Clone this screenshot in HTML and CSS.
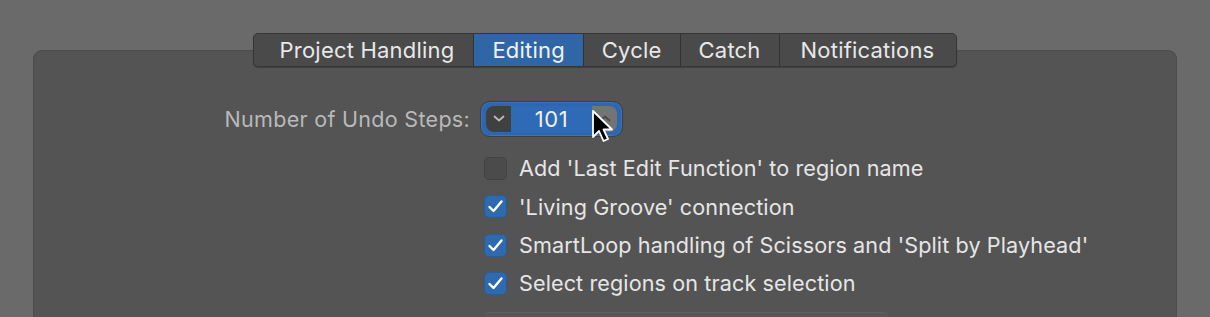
FILE: index.html
```html
<!DOCTYPE html>
<html lang="en">
<head>
    <meta charset="UTF-8">
    <title>Editing Settings</title>
    <link rel="stylesheet" href="styles.css">
</head>
<body>
    <div class="panel">
        <div class="tabs">
            <div class="tab">Project Handling</div>
            <div class="tab active">Editing</div>
            <div class="tab">Cycle</div>
            <div class="tab">Catch</div>
            <div class="tab">Notifications</div>
        </div>

        <div class="settings">
            <div class="row undo-row">
                <label class="row-label">Number of Undo Steps:</label>
                <div class="stepper">
                    <span class="step-btn down">
                        <svg width="14" height="9" viewBox="0 0 14 9"><path d="M2.5 2.5 L7 6.5 L11.5 2.5" fill="none" stroke="#bdbdbd" stroke-width="1.7" stroke-linecap="round" stroke-linejoin="round"/></svg>
                    </span>
                    <span class="step-value">101</span>
                    <span class="step-btn up">
                        <svg width="14" height="9" viewBox="0 0 14 9"><path d="M2.5 6.5 L7 2.5 L11.5 6.5" fill="none" stroke="#4a4a4a" stroke-width="1.7" stroke-linecap="round" stroke-linejoin="round"/></svg>
                    </span>
                    <svg class="cursor" width="26" height="38" viewBox="0 0 26 38">
                        <path d="M2 2 L2 28 L8 22 L12.5 32 L17 30 L12.5 20.5 L21 20.5 Z" fill="#000" stroke="#fff" stroke-width="1.8" stroke-linejoin="round"/>
                    </svg>
                </div>
            </div>

            <div class="checks">
                <label class="check"><span class="box"></span>Add 'Last Edit Function' to region name</label>
                <label class="check"><span class="box on"><svg width="17" height="15" viewBox="0 0 17 15"><path d="M2.5 8 L6.5 12 L14.5 2.5" fill="none" stroke="#fff" stroke-width="2.4" stroke-linecap="round" stroke-linejoin="round"/></svg></span>'Living Groove' connection</label>
                <label class="check"><span class="box on"><svg width="17" height="15" viewBox="0 0 17 15"><path d="M2.5 8 L6.5 12 L14.5 2.5" fill="none" stroke="#fff" stroke-width="2.4" stroke-linecap="round" stroke-linejoin="round"/></svg></span>SmartLoop handling of Scissors and 'Split by Playhead'</label>
                <label class="check"><span class="box on"><svg width="17" height="15" viewBox="0 0 17 15"><path d="M2.5 8 L6.5 12 L14.5 2.5" fill="none" stroke="#fff" stroke-width="2.4" stroke-linecap="round" stroke-linejoin="round"/></svg></span>Select regions on track selection</label>
            </div>

            <div class="popup-edge"></div>
        </div>
    </div>
</body>
</html>
```

FILE: styles.css
```css
body {
    margin: 0;
    padding: 0;
    background: #6a6a6a;
    font-family: 'Inter', 'Noto Sans', sans-serif;
    color: #e6e6e6;
    overflow: hidden;
    height: 317px;
}

/* Settings panel */
.panel {
    margin: 50px 33px 0 33px;
    height: 266px;
    background: #545454;
    border: 1px solid #4c4c4c;
    border-bottom: none;
    border-radius: 9px 9px 0 0;
    display: flex;
    flex-direction: column;
    align-items: center;
}

/* Tabs */
.tabs {
    display: flex;
    margin-top: -18px;
    height: 34px;
    background: #4a4a4a;
    border: 1px solid #363636;
    border-radius: 5px;
    box-shadow: 0 1px 1px rgba(0, 0, 0, 0.25);
    overflow: hidden;
}

.tab {
    display: flex;
    align-items: center;
    justify-content: center;
    padding: 0 18px;
    font-size: 22px;
    letter-spacing: 0.2px;
    color: #e8e8e8;
    border-left: 1px solid #333;
}

.tab:first-child {
    border-left: none;
    padding: 0 19px 0 26px;
}

.tab:last-child {
    padding: 0 22px 0 21px;
}

.tab.active {
    background: #2f67a6;
    color: #f2f2f2;
}

.settings {
    align-self: stretch;
    display: flex;
    flex-direction: column;
}

.row {
    display: flex;
    align-items: center;
}

.undo-row {
    margin-top: 34px;
}

.row-label {
    width: 436px;
    text-align: right;
    font-size: 21.5px;
    letter-spacing: 0.3px;
    color: #b9b9b9;
}

/* Stepper */
.stepper {
    position: relative;
    display: flex;
    align-items: center;
    margin-left: 10px;
    height: 26px;
    padding: 4px 5px;
    background: #2f66b0;
    border: 1px solid #3f3f3f;
    border-radius: 10px;
    box-shadow: inset 0 0 0 1px #3b73bd;
}

.step-btn {
    display: flex;
    align-items: center;
    justify-content: center;
    width: 25px;
    height: 26px;
}

.step-btn.down {
    background: #404040;
    border-radius: 8px 0 0 8px;
}

.step-btn.up {
    background: #747474;
    border-radius: 0 8px 8px 0;
}

.step-value {
    width: 81px;
    text-align: center;
    font-size: 22px;
    letter-spacing: 0.5px;
    color: #f0f0f0;
    background: #2e6ab5;
    line-height: 26px;
}

.cursor {
    position: absolute;
    left: 110px;
    top: 7px;
}

/* Checkboxes */
.checks {
    display: flex;
    flex-direction: column;
    gap: 15px;
    margin-top: 20px;
    margin-left: 450px;
}

.check {
    display: flex;
    align-items: center;
    font-size: 21.6px;
    letter-spacing: 0.1px;
    color: #e6e6e6;
    height: 23.3px;
}

.box {
    display: flex;
    align-items: center;
    justify-content: center;
    width: 21px;
    height: 21px;
    margin-right: 12px;
    background: #4b4b4b;
    border: 1px solid #434343;
    border-radius: 5px;
}

.box.on {
    background: #2f69ae;
    border-color: #2a5c98;
}

.popup-edge {
    margin: 17px 0 0 451px;
    width: 403px;
    height: 4px;
    border-top: 1px solid #5f5f5f;
    border-radius: 4px 4px 0 0;
    background: #575757;
}
```
